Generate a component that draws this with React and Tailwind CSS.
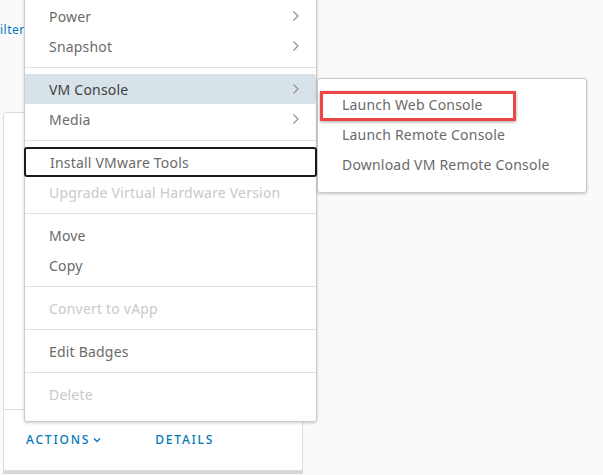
import React from 'react';

const font = { fontFamily: '"Noto Sans", "Open Sans", sans-serif' };

function Chevron() {
  return (
    <svg width="8" height="12" viewBox="0 0 8 12" className="text-[#8c8c8c]">
      <path d="M1.5 1.5 L6 6 L1.5 10.5" fill="none" stroke="currentColor" strokeWidth="1.1" />
    </svg>
  );
}

function Item({ label, sub, disabled, active, focused }) {
  let cls = 'h-[30px] flex items-center justify-between pl-[24px] pr-[16px] text-[14px] tracking-[0.2px] ';
  if (disabled) cls += 'text-[#c9c9c9]';
  else if (active) cls += 'text-[#3f3f3f] bg-[#d8e3e9] rounded-r-[3px]';
  else cls += 'text-[#6a6a6a]';
  if (focused) cls += ' border-2 border-[#1a1a1a] rounded-[3px] -mx-[1px] pl-[23px]';
  return (
    <div className={cls}>
      <span>{label}</span>
      {sub && <Chevron />}
    </div>
  );
}

function Divider() {
  return <div className="h-px bg-[#e1e1e1] my-[6px]" />;
}

export default function App() {
  return (
    <div className="relative w-[603px] h-[475px] bg-[#fafafa] overflow-hidden" style={font}>
      <div className="pt-[21px] text-[12px] text-[#0079b8] tracking-[0.5px]">ilter</div>

      <div className="mt-[73px] ml-[3px] w-[300px] h-[359px] bg-white border border-[#dddddd] rounded-t-[3px] shadow-[0_3px_0_#d7d7d7] flex flex-col">
        <div className="flex-1" />
        <div className="h-[61px] border-t border-[#dddddd] flex items-center pl-[22px] gap-[54px] text-[12px] text-[#0079b8] tracking-[1.8px] font-medium">
          <span className="flex items-center gap-[3px]">
            ACTIONS
            <svg width="8" height="6" viewBox="0 0 8 6">
              <path d="M1 1.5 L4 4.5 L7 1.5" fill="none" stroke="#0079b8" strokeWidth="1.3" />
            </svg>
          </span>
          <span>DETAILS</span>
        </div>
      </div>

      <div className="absolute left-[24px] top-[-5px] w-[293px] bg-white border border-[#cccccc] rounded-[3px] shadow-[0_1px_3px_rgba(0,0,0,0.2)] pt-[5px] pb-[12px]">
        <Item label="Power" sub />
        <Item label="Snapshot" sub />
        <Divider />
        <Item label="VM Console" sub active />
        <Item label="Media" sub />
        <Divider />
        <Item label="Install VMware Tools" focused />
        <Item label="Upgrade Virtual Hardware Version" disabled />
        <Divider />
        <Item label="Move" />
        <Item label="Copy" />
        <Divider />
        <Item label="Convert to vApp" disabled />
        <Divider />
        <Item label="Edit Badges" />
        <Divider />
        <Item label="Delete" disabled />
      </div>

      <div className="absolute left-[317px] top-[78px] w-[270px] bg-white border border-[#c8c8c8] rounded-[3px] shadow-[0_1px_3px_rgba(0,0,0,0.2)] pt-[10px] pb-[13px]">
        <div className="relative h-[30px] flex items-center pl-[24px] text-[14px] tracking-[0.2px] text-[#6a6a6a]">
          <span>Launch Web Console</span>
          <div className="absolute left-[2px] top-[2px] w-[196px] h-[30px] border-[3px] border-[#ec4545] shadow-[0_1px_3px_rgba(0,0,0,0.35)]" />
        </div>
        <div className="h-[30px] flex items-center pl-[24px] text-[14px] tracking-[0.2px] text-[#6a6a6a]">Launch Remote Console</div>
        <div className="h-[30px] flex items-center pl-[24px] text-[14px] tracking-[0.2px] text-[#6a6a6a]">Download VM Remote Console</div>
      </div>
    </div>
  );
}
